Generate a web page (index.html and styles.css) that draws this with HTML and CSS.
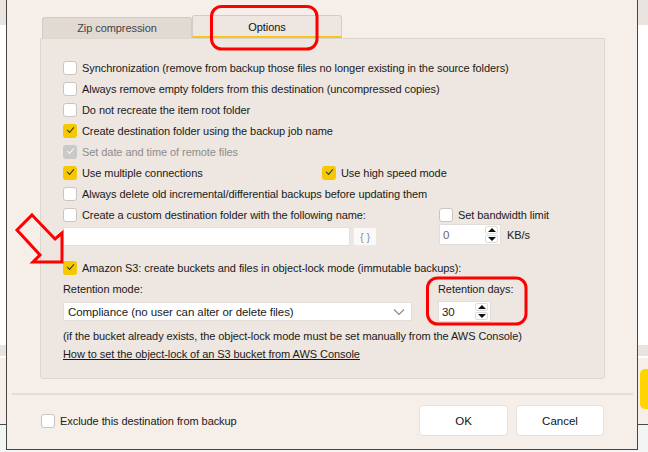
FILE: index.html
```html
<!DOCTYPE html>
<html lang="en">
<head>
  <meta charset="UTF-8" />
  <title>Destination options</title>
  <link rel="stylesheet" href="styles.css">
</head>
<body>

<!-- WINDOW BEHIND THE DIALOG -->
<div class="desktop">
  <div class="bd-top"></div>
  <div class="bd-white"></div>
  <div class="bd-band"></div>
  <div class="bd-lower"><span class="bd-yellow"></span></div>
  <div class="bd-bottom"></div>
</div>

<!-- DIALOG -->
<div class="dialog">
  <div class="tabs">
    <div class="tab">Zip compression</div>
    <div class="tab active">Options</div>
  </div>

  <div class="panel">
    <label class="row"><span class="cb"></span>Synchronization (remove from backup those files no longer existing in the source folders)</label>
    <label class="row"><span class="cb"></span>Always remove empty folders from this destination (uncompressed copies)</label>
    <label class="row"><span class="cb"></span>Do not recreate the item root folder</label>
    <label class="row"><span class="cb on"></span>Create destination folder using the backup job name</label>
    <label class="row disabled"><span class="cb dis"></span>Set date and time of remote files</label>
    <div class="row">
      <label class="item first"><span class="cb on"></span>Use multiple connections</label>
      <label class="item"><span class="cb on"></span>Use high speed mode</label>
    </div>
    <label class="row"><span class="cb"></span>Always delete old incremental/differential backups before updating them</label>

    <div class="split">
      <div class="col-left">
        <label class="row"><span class="cb"></span>Create a custom destination folder with the following name:</label>
        <div class="field-row">
          <span class="input"></span>
          <span class="vars">{ }</span>
        </div>
      </div>
      <div class="col-right">
        <label class="row"><span class="cb"></span>Set bandwidth limit</label>
        <div class="field-row">
          <span class="spin kb">
            <span class="val muted">0</span>
            <span class="arrows"><span class="up"></span><span class="down"></span></span>
          </span>
          <span class="unit">KB/s</span>
        </div>
      </div>
    </div>

    <label class="row s3"><span class="cb on"></span>Amazon S3: create buckets and files in object-lock mode (immutable backups):</label>

    <div class="retention">
      <div class="ret-mode">
        <div class="lbl">Retention mode:</div>
        <div class="select">
          <span>Compliance (no user can alter or delete files)</span>
          <svg width="12" height="8" viewBox="0 0 12 8"><polyline points="1,1.5 6,6.5 11,1.5" fill="none" stroke="#8a8a8a" stroke-width="1.2"/></svg>
        </div>
      </div>
      <div class="ret-days">
        <div class="lbl">Retention days:</div>
        <span class="spin days">
          <span class="val">30</span>
          <span class="arrows"><span class="up"></span><span class="down"></span></span>
        </span>
      </div>
    </div>

    <div class="note">(if the bucket already exists, the object-lock mode must be set manually from the AWS Console)</div>
    <a class="link" href="#">How to set the object-lock of an S3 bucket from AWS Console</a>
  </div>

  <div class="sep"></div>

  <div class="footer">
    <label class="row"><span class="cb"></span>Exclude this destination from backup</label>
    <div class="buttons">
      <button class="btn">OK</button>
      <button class="btn">Cancel</button>
    </div>
  </div>
</div>

<!-- RED ANNOTATIONS -->
<svg class="marks" width="648" height="452" viewBox="0 0 648 452">
  <rect x="211.5" y="6.5" width="105.5" height="42.5" rx="10" fill="none" stroke="#ff0000" stroke-width="3"/>
  <rect x="427.5" y="278" width="98.5" height="46" rx="10" fill="none" stroke="#ff0000" stroke-width="3"/>
  <polygon points="32,215 55,239 62,233 62,262 33,262 40,255 17,230" fill="none" stroke="#ff0000" stroke-width="3"/>
</svg>

</body>
</html>
```

FILE: styles.css
```css
body {
  margin: 0;
  width: 648px;
  height: 452px;
  position: relative;
  overflow: hidden;
  font-family: 'Liberation Sans', Arial, sans-serif;
  font-size: 11px;
  letter-spacing: -0.07px;
  color: #1a1a1a;
  background: #fff;
}

/* Window behind the dialog */
.bd-top {
  height: 25px;
  background: #e9e4df;
}

.bd-white {
  height: 320px;
  background: #fff;
}

.bd-band {
  height: 11px;
  background: #e8e3df;
  border-bottom: 2px solid #fff;
  box-shadow: 0 3px 0 #dcd9d6;
}

.bd-lower {
  height: 66px;
  background: #f6efe9;
  display: flex;
  justify-content: flex-end;
  padding-top: 11px;
  box-sizing: border-box;
}

.bd-yellow {
  width: 30px;
  height: 40px;
  margin-right: -22px;
  border-radius: 5px;
  background: #ffd400;
}

.bd-bottom {
  height: 28px;
  border-top: 1px solid #4a4a4a;
  background: #f3f5f5;
}

/* Dialog */
.dialog {
  position: absolute;
  left: 6px;
  top: 0;
  width: 632px;
  height: 450px;
  box-sizing: border-box;
  background: #f6eee8;
  border: 1px solid #454545;
  border-top: 0;
}

.tabs {
  display: flex;
  align-items: flex-end;
  margin-left: 35px;
  padding-top: 15px;
  height: 38px;
  box-sizing: border-box;
}

.tab {
  width: 150px;
  height: 21px;
  box-sizing: border-box;
  border: 1px solid #d3ccc6;
  border-bottom: 0;
  border-radius: 3px 3px 0 0;
  background: #e1dad3;
  color: #444;
  font-size: 11px;
  display: flex;
  align-items: center;
  justify-content: center;
}

.tab.active {
  height: 23px;
  background: #ede6e1;
  color: #111;
  border-bottom: 2px solid #f6c51b;
  padding-top: 2px;
}

.panel {
  margin-left: 33px;
  width: 565px;
  height: 341px;
  box-sizing: border-box;
  border: 1px solid #ddd6d0;
  border-radius: 0 0 3px 3px;
  background: #ede6e1;
  padding: 18px 0 0 22px;
}

.row {
  display: flex;
  align-items: center;
  height: 21px;
  white-space: nowrap;
}

.item {
  display: flex;
  align-items: center;
}

.item.first {
  width: 259px;
}

.disabled {
  color: #8d8d8d;
}

/* Checkbox */
.cb {
  flex: none;
  width: 14px;
  height: 14px;
  box-sizing: border-box;
  margin-right: 5px;
  border: 1px solid #cbc5bf;
  border-radius: 3px;
  background: #fff;
  display: flex;
  align-items: center;
  justify-content: center;
}

.cb.on,
.cb.dis {
  border: 0;
  background: #f5c800;
}

.cb.dis {
  background: #c9c9c9;
}

.cb.on::after,
.cb.dis::after {
  content: '';
  width: 6px;
  height: 3px;
  margin-top: -3px;
  border-left: 1px solid #333;
  border-bottom: 1px solid #333;
  transform: rotate(-48deg);
}

.cb.dis::after {
  border-color: #f4f4f4;
}

/* Custom folder / bandwidth */
.split {
  display: flex;
}

.col-left {
  width: 315px;
}

.col-right {
  margin-left: 61px;
}

.field-row {
  display: flex;
  align-items: center;
  margin-top: 2px;
}

.input {
  width: 287px;
  height: 19px;
  box-sizing: border-box;
  border: 1px solid #e4dfda;
  background: #fff;
}

.vars {
  width: 24px;
  height: 19px;
  margin-left: 3px;
  box-sizing: border-box;
  border: 1px solid #eee9e4;
  border-radius: 2px;
  background: #fbf9f7;
  color: #7f93b0;
  font-size: 11px;
  display: flex;
  align-items: center;
  justify-content: center;
}

.col-right .field-row {
  margin-top: -1px;
}

.spin {
  height: 21px;
  box-sizing: border-box;
  border: 1px solid #e2ddd8;
  background: #fff;
  display: flex;
  align-items: center;
  justify-content: space-between;
  padding: 0 2px 0 3px;
}

.spin.kb {
  width: 62px;
}

.spin.days {
  width: 53px;
}

.val {
  font-size: 11.5px;
}

.val.muted {
  color: #666;
}

.arrows {
  display: flex;
  flex-direction: column;
  gap: 1px;
}

.arrows span {
  width: 13px;
  height: 8px;
  box-sizing: border-box;
  border: 1px solid #e0dbd6;
  border-radius: 2px;
  display: flex;
  align-items: center;
  justify-content: center;
}

.arrows .up::after,
.arrows .down::after {
  content: '';
  border-left: 4px solid transparent;
  border-right: 4px solid transparent;
}

.arrows .up::after {
  border-bottom: 4px solid #111;
}

.arrows .down::after {
  border-top: 4px solid #111;
}

.unit {
  margin-left: 6px;
}

.s3 {
  margin-top: 11px;
}

/* Retention */
.retention {
  display: flex;
  margin-top: 3px;
}

.ret-mode {
  width: 349px;
}

.ret-days {
  margin-left: 26px;
}

.lbl {
  line-height: 16px;
}

.ret-mode .lbl {
  margin-bottom: 5px;
}

.ret-days .lbl {
  margin-bottom: 4px;
}

.select {
  height: 19px;
  box-sizing: border-box;
  border: 1px solid #e4dfda;
  background: #fff;
  display: flex;
  align-items: center;
  justify-content: space-between;
  padding: 0 6px 0 4px;
  font-size: 11.5px;
}

.note {
  margin-top: 6px;
  line-height: 16px;
}

.link {
  display: block;
  width: max-content;
  margin-top: 2px;
  line-height: 16px;
  color: #1a1a1a;
  text-decoration: underline;
}

/* Footer */
.sep {
  margin: 14px 4px 0 5px;
  height: 2px;
  background: #e2ddd8;
}

.footer {
  display: flex;
  align-items: center;
  justify-content: space-between;
  margin-top: 10px;
  padding: 0 33px 0 34px;
}

.buttons {
  display: flex;
  gap: 8px;
}

.btn {
  width: 89px;
  height: 31px;
  border: 1px solid #e6e1dc;
  border-radius: 4px;
  background: #fff;
  font-family: inherit;
  font-size: 11.5px;
  color: #111;
}

.btn + .btn {
  width: 88px;
}

.marks {
  position: absolute;
  left: 0;
  top: 0;
  pointer-events: none;
}
```
